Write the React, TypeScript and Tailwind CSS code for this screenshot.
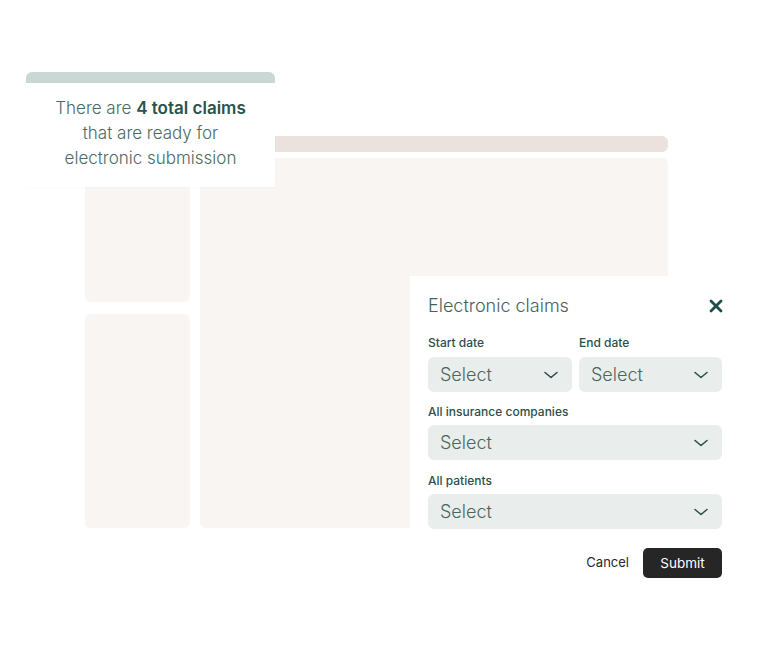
import React from "react";

function Chevron() {
  return (
    <svg width="16" height="10" viewBox="0 0 16 10" fill="none">
      <path d="M2 2.5 L8 7.5 L14 2.5" stroke="#2b4f4a" strokeWidth="1.6" strokeLinecap="round" strokeLinejoin="round" />
    </svg>
  );
}

function SelectBox({ className }: { className: string }) {
  return (
    <div className={`flex h-[35px] items-center justify-between rounded-[6px] bg-[#e9eeec] pl-[12px] pr-[13px] ${className}`}>
      <span className="text-[18px] font-light leading-none text-[#48675f]">Select</span>
      <Chevron />
    </div>
  );
}

export default function App() {
  return (
    <div
      className="relative h-[668px] w-[768px] overflow-hidden bg-white"
      style={{ fontFamily: "Inter, 'Noto Sans', sans-serif" }}
    >
      {/* background mockup */}
      <div className="ml-[85px] flex pt-[136px]">
        <div className="mt-[22px] flex w-[105px] flex-col gap-[12px]">
          <div className="h-[144px] rounded-[6px] bg-[#f8f5f2]" />
          <div className="h-[214px] rounded-[6px] bg-[#f8f5f2]" />
        </div>
        <div className="ml-[10px] flex w-[468px] flex-col gap-[6px]">
          <div className="h-[16px] rounded-[6px] bg-[#ece2dd]" />
          <div className="h-[370px] rounded-[6px] bg-[#f8f5f2]" />
        </div>
      </div>

      {/* tooltip card */}
      <div className="absolute left-[26px] top-[72px] flex w-[249px] flex-col overflow-hidden rounded-t-[6px] bg-white shadow-[0_1px_2px_rgba(0,0,0,0.02)]">
        <div className="h-[11px] bg-[#c9d7d5]" />
        <div className="flex h-[104px] flex-col items-center pt-[13px] text-center text-[17px] font-light leading-[25px] text-[#4b6a66]">
          <div>
            There are <span className="font-semibold text-[#2a534d]">4 total claims</span>
          </div>
          <div>that are ready for</div>
          <div>electronic submission</div>
        </div>
      </div>

      {/* dialog */}
      <div className="absolute left-[410px] top-[276px] w-[330px] bg-white pb-[20px] pl-[18px] pr-[18px] pt-[18px]">
        <div className="flex h-[24px] items-center justify-between">
          <span className="text-[18px] font-light leading-[24px] text-[#44625d]">Electronic claims</span>
          <svg width="14" height="14" viewBox="0 0 14 14" className="mr-[-1px]">
            <path d="M2 2 L12 12 M12 2 L2 12" stroke="#1c4f4a" strokeWidth="2.8" strokeLinecap="round" />
          </svg>
        </div>
        <div className="mt-[17px] flex gap-[7px]">
          <div className="flex w-[144px] flex-col">
            <span className="text-[12px] font-medium leading-[16px] text-[#2d4f4a]">Start date</span>
            <SelectBox className="mt-[6px] w-[144px]" />
          </div>
          <div className="flex w-[143px] flex-col">
            <span className="text-[12px] font-medium leading-[16px] text-[#2d4f4a]">End date</span>
            <SelectBox className="mt-[6px] w-[143px]" />
          </div>
        </div>
        <div className="mt-[12px] text-[12px] font-medium leading-[16px] text-[#2d4f4a]">All insurance companies</div>
        <SelectBox className="mt-[5px] w-[294px]" />
        <div className="mt-[13px] text-[12px] font-medium leading-[16px] text-[#2d4f4a]">All patients</div>
        <SelectBox className="mt-[5px] w-[294px]" />
        <div className="mt-[19px] flex w-[294px] items-center justify-end gap-[14px]">
          <span className="text-[13px] text-[#2a2a2a]">Cancel</span>
          <button className="h-[30px] w-[79px] rounded-[5px] bg-[#262626] text-[13.5px] text-white">Submit</button>
        </div>
      </div>
    </div>
  );
}
